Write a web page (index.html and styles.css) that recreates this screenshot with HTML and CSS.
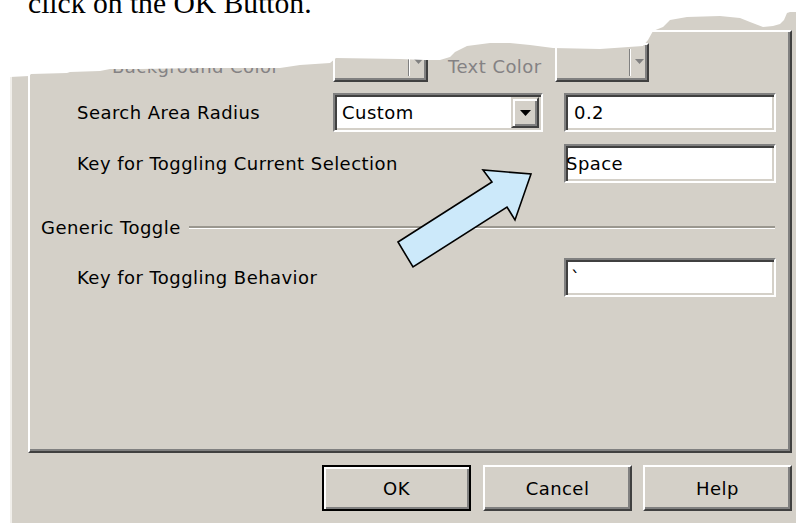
FILE: index.html
```html
<!DOCTYPE html>
<html lang="en">
<head>
<meta charset="utf-8">
<title>Selection Options</title>
<link rel="stylesheet" href="styles.css">
</head>
<body>
<p class="caption">click on the OK Button.</p>

<!-- torn paper edge along the top of the dialog -->
<svg class="tear" width="796" height="80" viewBox="0 0 796 80" aria-hidden="true">
  <polygon fill="#fff" points="0,0 796,0 796,12 790,12 787,13 784,20 780,24 773,26 763,27 750,22 740,18 720,16 687,17 670,20 663,27 653,31 648,40 643,46 600,49 553,48 530,45 510,43 490,43 467,46 455,52 450,57 440,60 425,60 400,59 336,58 330,63 300,65 280,68 200,68 140,69 110,69 100,71 70,72 67,73 31,74 29,76 10,77 0,78"/>
</svg>

<div class="dialog">
  <div class="page">
    <div class="row row-colors">
      <span class="label label-disabled label-bg">Background Color</span>
      <div class="color-btn color-btn-bg">
        <span class="swatch"></span>
        <span class="sep"></span>
        <span class="drop"><svg width="9" height="5" viewBox="0 0 9 5"><polygon points="0,0 9,0 4.5,5" fill="#808080"/></svg></span>
      </div>
      <span class="label label-disabled label-text">Text Color</span>
      <div class="color-btn color-btn-text">
        <span class="swatch"></span>
        <span class="sep"></span>
        <span class="drop"><svg width="9" height="5" viewBox="0 0 9 5"><polygon points="0,0 9,0 4.5,5" fill="#808080"/></svg></span>
      </div>
    </div>

    <div class="row row-radius">
      <span class="label">Search Area Radius</span>
      <div class="combo">
        <span class="combo-value">Custom</span>
        <span class="combo-btn"><svg width="11" height="6" viewBox="0 0 11 6"><polygon points="0,0 11,0 5.5,6" fill="#000"/></svg></span>
      </div>
      <div class="field">0.2</div>
    </div>

    <div class="row row-selection">
      <span class="label">Key for Toggling Current Selection</span>
      <div class="field field-flush">Space</div>
    </div>

    <div class="group">
      <span class="group-title">Generic Toggle</span>
      <span class="rule"></span>
    </div>

    <div class="row row-behavior">
      <span class="label">Key for Toggling Behavior</span>
      <div class="field field-tight">`</div>
    </div>
  </div>

  <div class="buttons">
    <button class="btn btn-default">OK</button>
    <button class="btn">Cancel</button>
    <button class="btn">Help</button>
  </div>
</div>

<!-- callout arrow pointing at the selection key field -->
<svg class="callout" width="150" height="115" viewBox="0 0 150 115" aria-hidden="true">
  <polygon points="8,82 102,22 93,10 141,14 125,60 117,47 23,107" fill="#cce9fa" stroke="#000" stroke-width="1.6" stroke-linejoin="miter"/>
</svg>
</body>
</html>
```

FILE: styles.css
```css
body {
  margin: 0;
  width: 796px;
  height: 523px;
  overflow: hidden;
  position: relative;
  background: #fff;
}

.caption {
  position: relative;
  z-index: 2;
  margin: -2px 0 0 28px;
  height: 9px;
  font: 29.6px/10px "Liberation Serif", "Times New Roman", serif;
  color: #000;
  white-space: nowrap;
}

.tear {
  position: absolute;
  left: 0;
  top: 0;
  z-index: 1;
}

.callout {
  position: absolute;
  left: 390px;
  top: 160px;
  z-index: 3;
}

/* dialog body */
.dialog {
  box-sizing: border-box;
  height: 516px;
  margin-left: 10px;
  padding-top: 23px;
  border-left: 2px solid #f1efeb;
  background: #d4d0c8;
  font: 18px "DejaVu Sans", "Noto Sans", sans-serif;
  letter-spacing: 0.45px;
  color: #000;
}

.page {
  box-sizing: border-box;
  width: 764px;
  height: 423px;
  margin-left: 16px;
  border: 2px solid;
  border-color: #fff #404040 #404040 #fff;
  box-shadow: inset -2px -2px #808080;
}

.row {
  display: flex;
  align-items: center;
  height: 39px;
  padding: 0 14px 0 47px;
  margin-top: 12px;
}

.row-colors { margin-top: 11px; }
.row-radius { margin-top: 11px; }
.row-selection { margin-top: 12px; }
.row-behavior { margin-top: 21px; }

.label {
  flex: none;
  width: 256px;
  white-space: nowrap;
}

.row-selection .label,
.row-behavior .label {
  width: auto;
}

.label-disabled {
  color: #848284;
  padding-top: 7px;
}

.label-bg {
  width: 221px;
  margin-left: 35px;
}

.label-text {
  width: 107px;
  margin-left: 20px;
}

/* raised colour picker buttons */
.color-btn {
  box-sizing: border-box;
  display: flex;
  height: 39px;
  border: 2px solid;
  border-color: #fff #404040 #404040 #fff;
  box-shadow: inset -2px -2px #808080;
}

.color-btn-bg { width: 95px; }
.color-btn-text { width: 94px; }

.swatch { flex: 1; }

.sep {
  width: 0;
  margin: 4px 0;
  border-left: 1px solid #808080;
  border-right: 1px solid #fff;
}

.drop {
  display: flex;
  align-items: center;
  justify-content: center;
  width: 16px;
  padding-bottom: 2px;
}

/* sunken inputs */
.combo,
.field {
  box-sizing: border-box;
  height: 39px;
  border: 2px solid;
  border-color: #808080 #fff #fff #808080;
  box-shadow: inset 2px 2px #404040, inset -2px -2px #d4d0c8;
  background: #fff;
  display: flex;
  align-items: center;
}

.combo {
  width: 210px;
  align-items: stretch;
}

.combo-value {
  flex: 1;
  display: flex;
  align-items: center;
  padding-left: 7px;
}

.combo-btn {
  box-sizing: border-box;
  width: 28px;
  margin: 2px 2px 2px 0;
  display: flex;
  align-items: center;
  justify-content: center;
  background: #d4d0c8;
  border: 2px solid;
  border-color: #d4d0c8 #404040 #404040 #d4d0c8;
  box-shadow: inset 2px 2px #fff, inset -2px -2px #808080;
}

.field {
  width: 212px;
  margin-left: auto;
  padding-left: 8px;
}

.field-flush { padding-left: 0; }
.field-tight { padding-left: 5px; }

/* group header with etched rule */
.group {
  display: flex;
  align-items: center;
  height: 20px;
  margin-top: 34px;
  padding: 0 15px 0 11px;
}

.group-title { white-space: nowrap; }

.rule {
  flex: 1;
  margin-left: 8px;
  border-top: 2px solid #9a978f;
  border-bottom: 1px solid #fff;
}

/* dialog buttons */
.buttons {
  display: flex;
  justify-content: flex-end;
  gap: 11px;
  margin-top: 12px;
  padding-right: 4px;
}

.btn {
  box-sizing: border-box;
  width: 149px;
  height: 46px;
  padding: 0;
  border: 2px solid;
  border-color: #fff #404040 #404040 #fff;
  box-shadow: inset -2px -2px #808080;
  background: #d4d0c8;
  font: inherit;
  letter-spacing: inherit;
  color: #000;
}

.btn-default {
  margin-right: 1px;
  border-color: #000;
  box-shadow: inset 2px 2px #fff, inset -2px -2px #808080;
}
```
